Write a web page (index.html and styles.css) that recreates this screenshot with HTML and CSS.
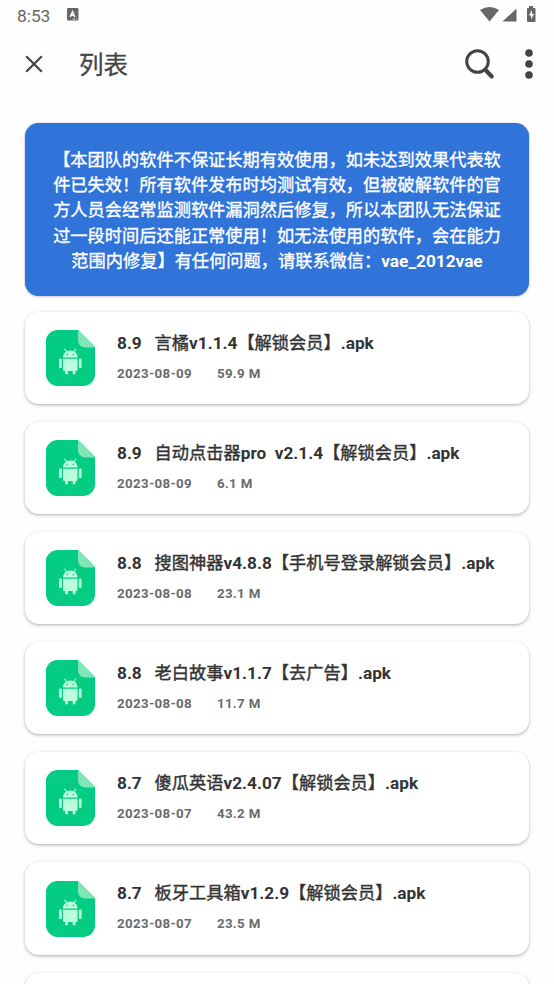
FILE: index.html
```html
<!DOCTYPE html>
<html lang="zh-CN">
<head>
<meta charset="utf-8">
<title>列表</title>
<link rel="stylesheet" href="styles.css">
</head>
<body>
<svg width="0" height="0" class="defs">
  <symbol id="apk" viewBox="0 0 49 56">
    <path fill="#04cc82" d="M10 0H32L49 17V46Q47 55 38 56H10Q2 54 0 46V9Q2 2 10 0Z"/>
    <path fill="#80e6b6" d="M32 0L49 17.500H39Q32 16.500 32 10Z"/>
    <g fill="#b9ffdb">
      <path d="M17 27.500C17 23.500 20 20.500 24.300 20.500S31.500 23.500 31.500 27.500Z"/>
      <path d="M18.500 18.700L20.800 22M30 18.700L27.700 22" stroke="#b9ffdb" stroke-width="1.100"/>
      <path d="M17 28.700H31.500V39.500Q31.500 41 30 41H29.500V43.500Q29.500 44.500 28.200 44.500T26.700 43.500V41H22V43.500Q22 44.500 20.700 44.500T19.200 43.500V41H18.500Q17 41 17 39.500Z"/>
      <rect x="13" y="28.500" width="2.800" height="9.500" rx="1"/>
      <rect x="32.800" y="28.500" width="2.800" height="9.500" rx="1"/>
    </g>
    <circle cx="21.300" cy="24.500" r=".8" fill="#04cc82"/>
    <circle cx="27.200" cy="24.500" r=".8" fill="#04cc82"/>
  </symbol>
</svg>
<div class="screen">
  <div class="status">
    <span class="clock">8:53</span>
    <svg class="ime" width="12" height="13" viewBox="0 0 12 13"><rect width="11.500" height="12.500" rx="1.200" fill="#666"/><path d="M3.200 9L5.500 3.800L7.800 9M4.200 7.300H7" fill="none" stroke="#fff" stroke-width="1.500"/><path d="M5.500 11H8M9 11H10" stroke="#fff" stroke-width=".8"/></svg>
    <svg class="signals" width="58" height="18" viewBox="0 0 58 18" fill="#666">
      <path d="M0 4Q9.500-2 19 4L9.500 15.500Z"/>
      <path d="M36.500 2.500V15.500H22.500Z"/>
      <path d="M49 0H53V2H54.500Q55.500 2 55.500 3V15Q55.500 16 54.500 16H48Q47 16 47 15V3Q47 2 48 2H49Z"/>
      <path d="M52 4L49 9.500H51V13.500L54 8H52Z" fill="#fff"/>
    </svg>
  </div>
  <header class="bar">
    <svg class="close" width="18" height="18" viewBox="0 0 18 18"><path d="M1.200 1.200L16.800 16.800M16.800 1.200L1.200 16.800" stroke="#444" stroke-width="2.200"/></svg>
    <h1>列表</h1>
    <svg class="search" width="30" height="31" viewBox="0 0 30 31" fill="none" stroke="#444"><circle cx="12.500" cy="12.500" r="10.800" stroke-width="3"/><path d="M20 20.500L21.500 22" stroke-width="3"/><path d="M21.500 22L26.700 27.500" stroke-width="4.200" stroke-linecap="round"/></svg>
    <svg class="more" width="8" height="30" viewBox="0 0 8 30" fill="#444"><circle cx="4" cy="4" r="3.800"/><circle cx="4" cy="15" r="3.800"/><circle cx="4" cy="26" r="3.800"/></svg>
  </header>
  <main>
    <section class="notice">【本团队的软件不保证长期有效使用，如未达到效果代表软<br>件已失效！所有软件发布时均测试有效，但被破解软件的官<br>方人员会经常监测软件漏洞然后修复，所以本团队无法保证<br>过一段时间后还能正常使用！如无法使用的软件，会在能力<br>范围内修复】有任何问题，请联系微信：<b>vae_2012vae</b></section>
    <article class="card"><svg class="icon"><use href="#apk"/></svg><div><h2><b>8.9   </b>言橘<b>v1.1.4</b>【解锁会员】<b>.apk</b></h2><p><span>2023-08-09</span><span>59.9 M</span></p></div></article>
    <article class="card"><svg class="icon"><use href="#apk"/></svg><div><h2><b>8.9   </b>自动点击器<b>pro  v2.1.4</b>【解锁会员】<b>.apk</b></h2><p><span>2023-08-09</span><span>6.1 M</span></p></div></article>
    <article class="card"><svg class="icon"><use href="#apk"/></svg><div><h2><b>8.8   </b>搜图神器<b>v4.8.8</b>【手机号登录解锁会员】<b>.apk</b></h2><p><span>2023-08-08</span><span>23.1 M</span></p></div></article>
    <article class="card"><svg class="icon"><use href="#apk"/></svg><div><h2><b>8.8   </b>老白故事<b>v1.1.7</b>【去广告】<b>.apk</b></h2><p><span>2023-08-08</span><span>11.7 M</span></p></div></article>
    <article class="card"><svg class="icon"><use href="#apk"/></svg><div><h2><b>8.7   </b>傻瓜英语<b>v2.4.07</b>【解锁会员】<b>.apk</b></h2><p><span>2023-08-07</span><span>43.2 M</span></p></div></article>
    <article class="card"><svg class="icon"><use href="#apk"/></svg><div><h2><b>8.7   </b>板牙工具箱<b>v1.2.9</b>【解锁会员】<b>.apk</b></h2><p><span>2023-08-07</span><span>23.5 M</span></p></div></article>
    <article class="card"></article>
  </main>
</div>
</body>
</html>
```
FILE: styles.css
```css
* { box-sizing: border-box; margin: 0; padding: 0; }
body { background: #fefefe; font-family: Roboto, "Noto Sans CJK SC", sans-serif; color: #333; }
svg { display: block; flex: none; }
.defs { position: absolute; }
.screen { height: 984px; overflow: hidden; }
.status { height: 30px; display: flex; align-items: flex-start; padding: 6px 16px 0 17px; color: #666; }
.clock { font-size: 17.3px; line-height: 20px; width: 50px; }
.ime { margin-top: 2px; }
.signals { margin-left: auto; }
.bar { height: 68px; display: flex; align-items: center; padding: 0 21px 0 25px; }
.close { margin-right: 36px; }
h1 { font-size: 24.5px; line-height: 36px; padding-top: 3px; font-weight: 400; color: #444; -webkit-text-stroke: .3px #444; }
.search { margin-left: auto; margin-right: 30px; }
main { padding: 25px 25px 0; }
.notice {
  height: 173px; margin-bottom: 16px; padding-top: 25px; border-radius: 14px;
  background: #3073d9; color: #fff; text-align: center; white-space: nowrap;
  font-size: 17.23px; line-height: 25.2px; -webkit-text-stroke: .35px #fff;
  box-shadow: 0 1px 3px rgba(0,0,0,.16), 0 0 1px #4a85df;
}
b { font-weight: 700; -webkit-text-stroke: 0; }
.card {
  height: 92.1px; margin-bottom: 18px; padding: 0 21px; border-radius: 14px;
  display: flex; align-items: center; gap: 22px; background: #fff;
  box-shadow: 0 1px 3px rgba(0,0,0,.25), 0 2px 4px rgba(0,0,0,.07);
}
.icon { width: 49px; height: 56px; }
h2 { font-size: 17.23px; line-height: 26px; margin-top: -4px; font-weight: 400; white-space: pre; -webkit-text-stroke: .4px #333; }
p { display: flex; gap: 25px; margin-top: 9px; font-size: 13.3px; line-height: 18px; font-weight: 700; letter-spacing: .34px; color: #6a6a6a; }
```
